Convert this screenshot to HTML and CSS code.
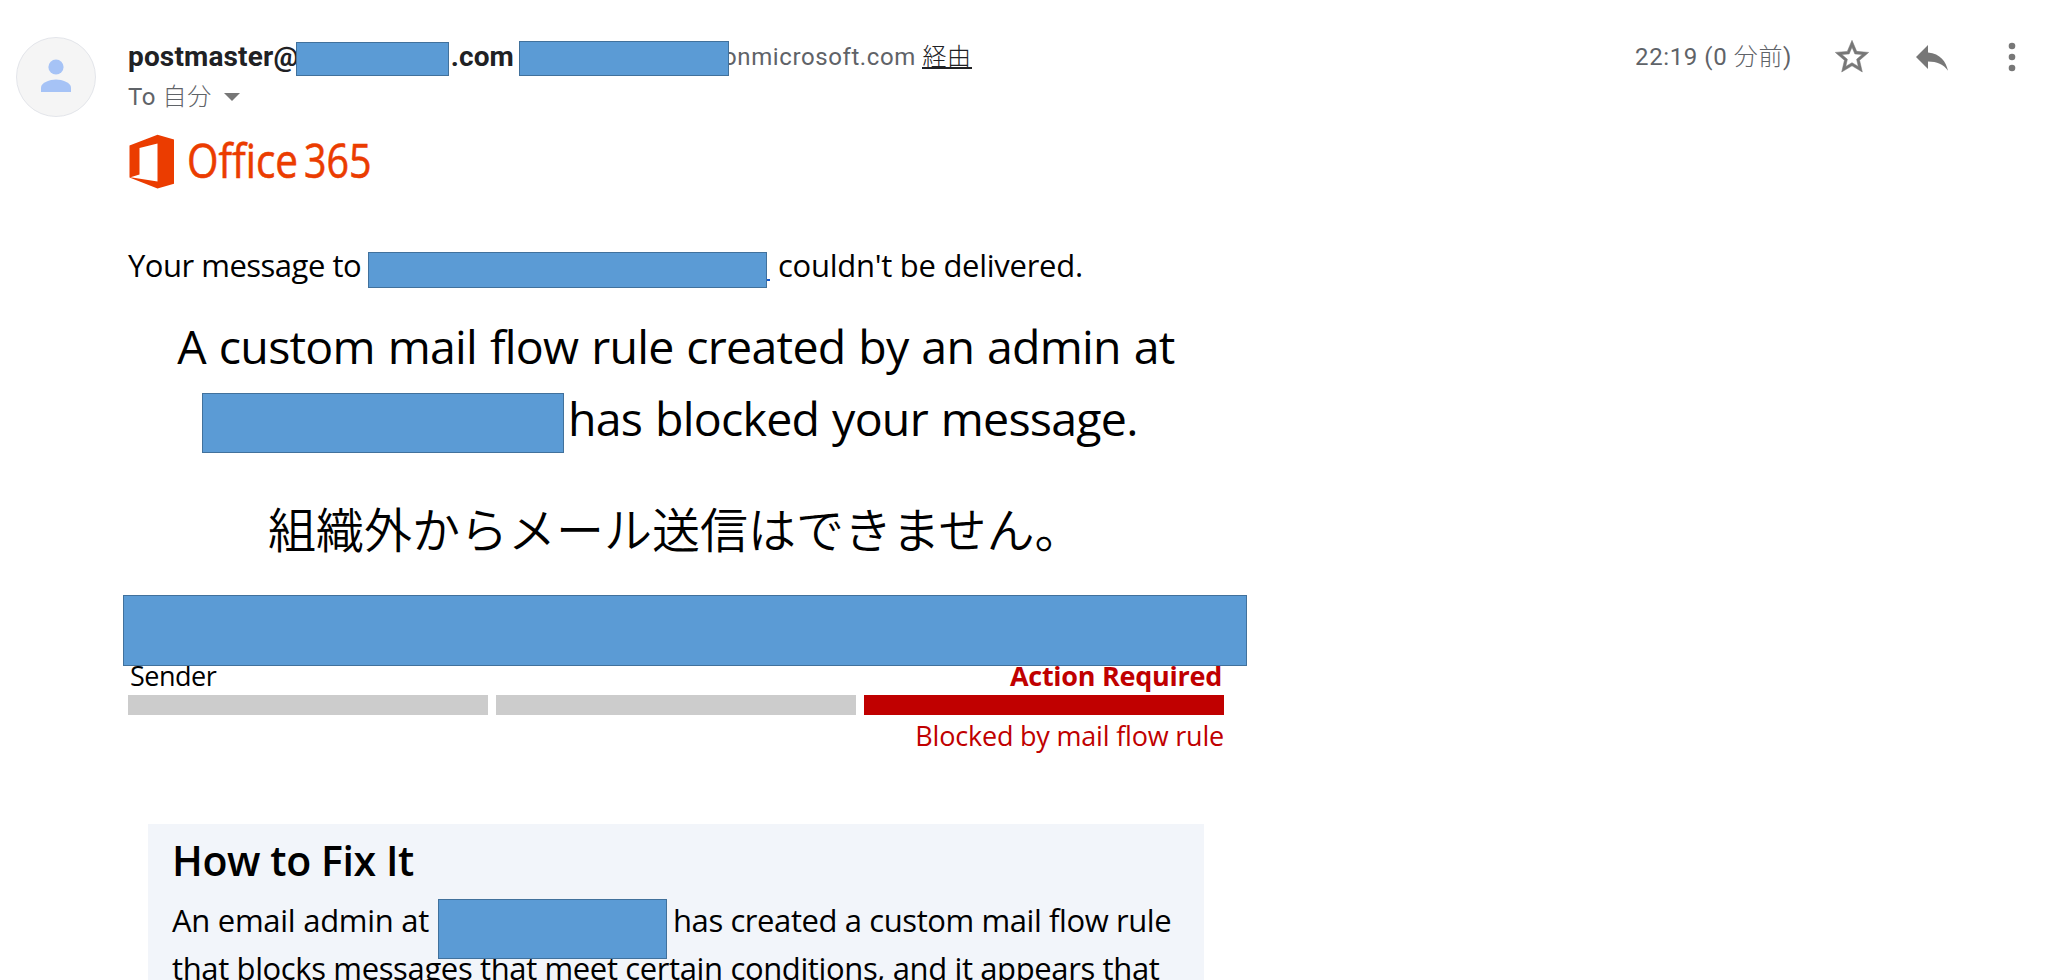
FILE: index.html
```
<!DOCTYPE html>
<html lang="ja">
<head>
    <meta charset="UTF-8">
    <meta name="viewport" content="width=device-width, initial-scale=1.0">
    <title>Undeliverable message</title>
    <link rel="stylesheet" href="styles.css">
</head>
<body>
    <div class="mail">
        <div class="avatar">
            <svg width="80" height="80" viewBox="0 0 80 80">
                <circle cx="40" cy="40" r="39.5" fill="#f5f5f5" stroke="#e3e5ea"/>
                <circle cx="40" cy="30" r="7.6" fill="#a6c3f6"/>
                <path d="M25 55v-4.500c0-5 9-8 15-8s15 3 15 8V55z" fill="#a6c3f6"/>
            </svg>
        </div>
        <div class="content">
            <header class="mail-header">
                <div class="from">
                    <div class="from-row">
                        <span class="sender">postmaster@</span>
                        <span class="mask mask-domain"></span>
                        <span class="sender">.com</span>
                        <span class="mask mask-via"></span>
                        <span class="via">onmicrosoft.com <a class="via-link">経由</a></span>
                    </div>
                    <div class="to-row">
                        <span>To <span class="thin">自分</span></span>
                        <svg width="16" height="8" viewBox="0 0 16 8"><path d="M0 0h16L8 8z" fill="#777"/></svg>
                    </div>
                </div>
                <div class="tools">
                    <span class="date">22:19 (0 <span class="thin">分前</span>)</span>
                    <!-- star -->
                    <svg class="star" width="40" height="40" viewBox="0 0 24 24"><path fill="#777" stroke="#777" stroke-width=".3" d="M22 9.240l-7.190-.62L12 2 9.190 8.630 2 9.240l5.460 4.730L5.820 21 12 17.270 18.180 21l-1.630-7.030L22 9.240zM12 15.400l-3.760 2.270 1-4.280-3.320-2.880 4.380-.38L12 6.100l1.710 4.040 4.380.38-3.320 2.880 1 4.280L12 15.400z"/></svg>
                    <!-- reply -->
                    <svg class="reply" width="32" height="26" viewBox="0 0 32 26"><path fill="#777" d="M12 7.500V0L0 12l12 12v-7.600c9 0 15.500 2.600 20 9.400C30 16.500 24.500 8.800 12 7.500z"/></svg>
                    <!-- more -->
                    <svg class="more" width="8" height="30" viewBox="0 0 8 30"><g fill="#777"><circle cx="4" cy="4" r="3.300"/><circle cx="4" cy="15" r="3.300"/><circle cx="4" cy="26" r="3.300"/></g></svg>
                </div>
            </header>

            <svg class="logo" width="244" height="56" viewBox="0 0 244 56">
                <path fill="#eb3c00" fill-rule="evenodd" d="M.5 11.500L28.500.8 45 5.500v44.300L28.500 54.400.5 43.500zM10.500 14v26.500L1.500 43.300l27 4.200V9.500z"/>
                <text class="logo-text" x="58" y="43.800" textLength="111" lengthAdjust="spacingAndGlyphs">Office</text>
                <text class="logo-text" x="175" y="43.800" textLength="67.500" lengthAdjust="spacingAndGlyphs">365</text>
            </svg>

            <div class="report">
                <p class="intro">
                    <span class="intro-start">Your message to</span>
                    <span class="mask mask-recipient"></span>
                    <span class="link-end"></span>
                    <span class="intro-end">couldn't be delivered.</span>
                </p>

                <h1 class="headline">
                    <span class="headline-row">A custom mail flow rule created by an admin at</span>
                    <span class="headline-row second">
                        <span class="mask mask-tenant"></span>
                        <span class="blocked">has blocked your message.</span>
                    </span>
                </h1>
                <p class="reason">組織外からメール送信はできません。</p>

                <div class="mask mask-names"></div>
                <div class="labels">
                    <span class="label-sender">Sender</span>
                    <span class="label-action">Action Required</span>
                </div>
                <div class="bars">
                    <div class="bar"></div>
                    <div class="bar"></div>
                    <div class="bar active"></div>
                </div>
                <p class="status">Blocked by mail flow rule</p>

                <section class="fix">
                    <h2>How to Fix It</h2>
                    <p class="fix-row">
                        <span class="fix-start">An email admin at</span>
                        <span class="mask mask-admin"></span>
                        <span class="fix-end">has created a custom mail flow rule</span>
                    </p>
                    <p class="fix-row fix-next">that blocks messages that meet certain conditions, and it appears that</p>
                </section>
            </div>
        </div>
    </div>
</body>
</html>
```

FILE: styles.css
```
* {
    box-sizing: border-box;
}

body {
    margin: 0;
    height: 980px;
    overflow: hidden;
    background-color: #fff;
    color: #000;
    font-family: "Open Sans", "Noto Sans CJK JP", sans-serif;
}

h1, h2, p {
    margin: 0;
    font-weight: 400;
}

svg {
    display: block;
    flex: none;
}

span, a {
    white-space: nowrap;
}

.mail {
    display: flex;
}

.avatar {
    width: 128px;
    flex: none;
    padding: 37px 0 0 16px;
}

.content {
    flex: 1;
}

/* blue cover boxes */
.mask {
    flex: none;
    background-color: #5b9bd5;
    border: 1px solid #41719c;
    position: relative;
    z-index: 1;
}

/* header */
.mail-header {
    display: flex;
    justify-content: space-between;
    height: 95px;
    padding-top: 39px;
    font-family: Roboto, "Noto Sans CJK JP", sans-serif;
    font-size: 24px;
    line-height: 36px;
    letter-spacing: 0.6px;
    color: #5f6368;
}

.thin {
    font-weight: 300;
}

.from-row {
    display: flex;
    height: 40px;
}

.sender {
    font-size: 28px;
    font-weight: 700;
    letter-spacing: 0.15px;
    color: #202124;
}

.mask-domain {
    width: 153px;
    height: 34px;
    margin: 3px 2px 0 -3px;
}

.mask-via {
    width: 210px;
    height: 35px;
    margin: 2px -6px 0 5px;
}

.via-link {
    font-weight: 300;
    color: #202124;
    border-bottom: 2px solid #202124;
    display: inline-block;
    height: 30px;
}

.to-row {
    display: flex;
    gap: 12px;
}

.to-row svg {
    margin-top: 14px;
}

.tools {
    display: flex;
    padding-right: 31px;
}

.star {
    margin: -2px 0 0 40px;
}

.reply {
    margin: 6px 0 0 44px;
}

.more {
    margin: 3px 0 0 60px;
}

/* report */
.logo {
    margin: 39px 0 0 1px;
}

.logo-text {
    font-family: "Open Sans", sans-serif;
    font-size: 47px;
    fill: #eb3c00;
    stroke: #eb3c00;
    stroke-width: 0.6px;
}

.report {
    width: 1096px;
    padding-top: 51px;
}

.intro {
    display: flex;
    height: 69px;
    font-size: 31px;
    line-height: 48px;
}

.intro-start {
    width: 240px;
    letter-spacing: -0.5px;
}

.mask-recipient {
    width: 399px;
    height: 36px;
    margin-top: 11px;
}

.link-end {
    width: 3px;
    height: 2px;
    margin-top: 38px;
    background-color: #1155cc;
}

.intro-end {
    margin-left: 8px;
    letter-spacing: -0.27px;
}

.headline {
    font-size: 46.5px;
    line-height: 72px;
    letter-spacing: -0.75px;
    word-spacing: 1.5px;
}

.headline-row {
    display: flex;
    justify-content: center;
    height: 72px;
}

.second {
    justify-content: flex-start;
    padding-left: 74px;
}

.mask-tenant {
    width: 362px;
    height: 60px;
    margin-top: 11px;
}

.blocked {
    margin-left: 4px;
}

.reason {
    margin-top: 37px;
    height: 104px;
    padding-left: 140px;
    font-family: "Noto Sans CJK JP", sans-serif;
    font-size: 48px;
    font-weight: 350;
    line-height: 72px;
}

.mask-names {
    width: 1124px;
    height: 71px;
    margin: 0 0 -9px -5px;
}

.labels {
    display: flex;
    justify-content: space-between;
    height: 38px;
    padding: 0 2px 0 2px;
    font-size: 27px;
    line-height: 37px;
}

.label-sender {
    letter-spacing: -0.5px;
}

.label-action {
    font-weight: 700;
    letter-spacing: -0.27px;
    color: #c00000;
}

.bars {
    display: flex;
    gap: 8px;
}

.bar {
    flex: 1;
    height: 20px;
    background-color: #ccc;
}

.active {
    background-color: #c00000;
}

.status {
    margin-top: 3px;
    text-align: right;
    font-size: 27px;
    line-height: 36px;
    letter-spacing: -0.2px;
    color: #c00000;
}

.fix {
    margin: 70px 20px 0;
    padding: 8px 0 0 24px;
    background-color: #f2f5fa;
}

.fix h2 {
    height: 64px;
    font-size: 41px;
    font-weight: 600;
    line-height: 56px;
    letter-spacing: -0.4px;
}

.fix-row {
    display: flex;
    height: 48px;
    font-size: 31px;
    line-height: 48px;
    letter-spacing: -0.41px;
}

.fix-start {
    width: 266px;
    letter-spacing: -0.28px;
}

.mask-admin {
    width: 229px;
    height: 60px;
    margin-top: 3px;
}

.fix-end {
    margin-left: 6px;
}

.fix-next {
    letter-spacing: -0.37px;
}
```
